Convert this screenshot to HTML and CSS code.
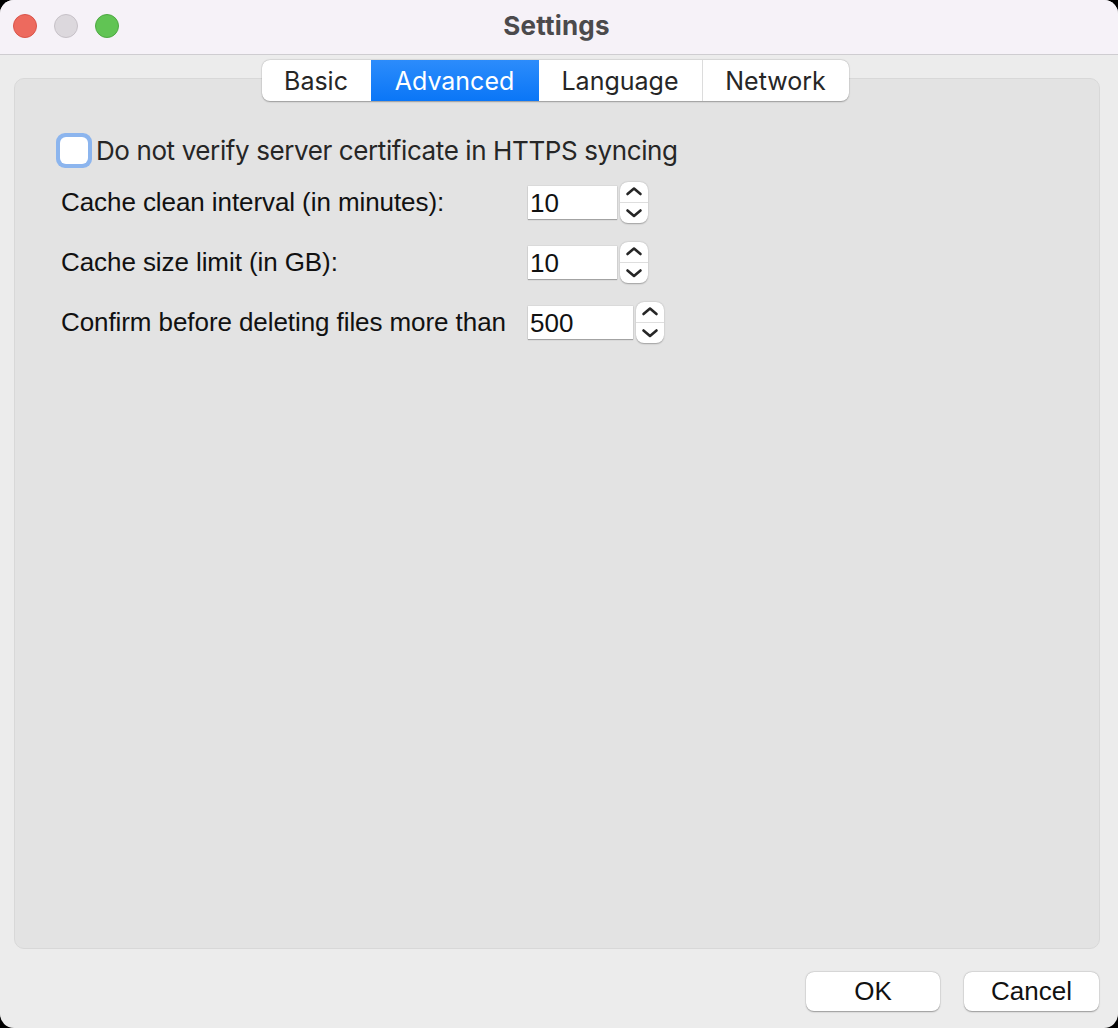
FILE: index.html
```html
<!DOCTYPE html>
<html>
<head>
<meta charset="utf-8">
<link rel="stylesheet" href="styles.css">
</head>
<body>
<div class="window">
  <div class="titlebar">
    <div class="lights">
      <span class="light red"></span>
      <span class="light gray"></span>
      <span class="light green"></span>
    </div>
    <div class="title">Settings</div>
  </div>
  <div class="main">
    <div class="tabs">
      <div class="tab">Basic</div>
      <div class="tab active">Advanced</div>
      <div class="tab">Language</div>
      <div class="tab">Network</div>
    </div>
    <div class="panel">
      <label class="check-row">
        <span class="check-ring"><span class="check-box"></span></span>
        <span class="check-label">Do not verify server certificate in HTTPS syncing</span>
      </label>
      <div class="row">
        <span class="label">Cache clean interval (in minutes):</span>
        <div class="spin">
          <span class="field">10</span>
          <span class="stepper">
            <svg width="28" height="41" viewBox="0 0 28 41"><path d="M7.5 12 L14 6.5 L20.5 12" fill="none" stroke="#262626" stroke-width="2.6" stroke-linecap="round" stroke-linejoin="round"/><path d="M7.5 28.5 L14 34 L20.5 28.5" fill="none" stroke="#262626" stroke-width="2.6" stroke-linecap="round" stroke-linejoin="round"/></svg>
          </span>
        </div>
      </div>
      <div class="row">
        <span class="label">Cache size limit (in GB):</span>
        <div class="spin">
          <span class="field">10</span>
          <span class="stepper">
            <svg width="28" height="41" viewBox="0 0 28 41"><path d="M7.5 12 L14 6.5 L20.5 12" fill="none" stroke="#262626" stroke-width="2.6" stroke-linecap="round" stroke-linejoin="round"/><path d="M7.5 28.5 L14 34 L20.5 28.5" fill="none" stroke="#262626" stroke-width="2.6" stroke-linecap="round" stroke-linejoin="round"/></svg>
          </span>
        </div>
      </div>
      <div class="row">
        <span class="label">Confirm before deleting files more than</span>
        <div class="spin">
          <span class="field wide">500</span>
          <span class="stepper">
            <svg width="28" height="41" viewBox="0 0 28 41"><path d="M7.5 12 L14 6.5 L20.5 12" fill="none" stroke="#262626" stroke-width="2.6" stroke-linecap="round" stroke-linejoin="round"/><path d="M7.5 28.5 L14 34 L20.5 28.5" fill="none" stroke="#262626" stroke-width="2.6" stroke-linecap="round" stroke-linejoin="round"/></svg>
          </span>
        </div>
      </div>
    </div>
    <div class="buttons">
      <button class="btn">OK</button>
      <button class="btn">Cancel</button>
    </div>
  </div>
</div>
</body>
</html>
```

FILE: styles.css
```css
html, body {
  margin: 0;
  padding: 0;
  background: #000;
}
.window {
  width: 1118px;
  height: 1028px;
  background: #ececec;
  border-radius: 14px;
  overflow: hidden;
  font-family: "Liberation Sans", Arial, sans-serif;
  display: flex;
  flex-direction: column;
}
.titlebar {
  height: 54px;
  background: #f6f2f8;
  border-bottom: 1px solid #cfcdd1;
  display: flex;
  align-items: center;
  justify-content: center;
  position: relative;
  flex: none;
}
.lights {
  position: absolute;
  left: 13px;
  top: 14px;
  display: flex;
  gap: 17px;
}
.light {
  width: 24px;
  height: 24px;
  border-radius: 50%;
  box-sizing: border-box;
}
.light.red { background: #ed6a5e; border: 1px solid #d9544a; }
.light.gray { background: #dcd8dd; border: 1px solid #c6c1c7; }
.light.green { background: #61c454; border: 1px solid #4ea843; }
.title {
  font-family: Inter, "Noto Sans", sans-serif;
  font-weight: 700;
  font-size: 26px;
  color: #4b4a4c;
  letter-spacing: 0.2px;
  margin-top: -4px;
  margin-left: -5px;
}
.main {
  flex: 1;
  display: flex;
  flex-direction: column;
  padding: 5px 18px 16px 14px;
}
.tabs {
  position: relative;
  z-index: 1;
  align-self: center;
  margin-right: 4px;
  display: flex;
  height: 41px;
  background: #fff;
  border-radius: 8px;
  box-shadow: 0 0.5px 1.5px rgba(0,0,0,0.3), 0 0 0 0.5px rgba(0,0,0,0.06);
  overflow: hidden;
  font-family: Inter, "Noto Sans", sans-serif;
  font-size: 25px;
  color: #262626;
}
.tab {
  display: flex;
  align-items: center;
  justify-content: center;
  border-left: 1px solid #dcdcdc;
  letter-spacing: 0;
  padding-top: 1px;
}
.tab:first-child { border-left: none; width: 109px; }
.tab:nth-child(2) { width: 168px; }
.tab:nth-child(3) { width: 163px; }
.tab:nth-child(4) { width: 146px; }
.tab.active {
  background: linear-gradient(#2c8cfb, #0a76f7);
  color: #fff;
  border-left: none;
}
.tab.active + .tab { border-left: none; }
.panel {
  margin-top: -23px;
  width: 1086px;
  height: 871px;
  box-sizing: border-box;
  background: #e3e3e3;
  border: 1px solid #d8d8d8;
  border-radius: 10px;
  padding: 54px 0 0 41px;
  display: flex;
  flex-direction: column;
}
.check-row {
  display: flex;
  align-items: center;
  height: 34px;
  margin-bottom: 5px;
}
.check-ring {
  width: 36px;
  height: 35px;
  box-sizing: border-box;
  border-radius: 9px;
  background: #8cb5ee;
  display: flex;
  align-items: center;
  justify-content: center;
}
.check-box {
  width: 28px;
  height: 27px;
  border-radius: 6px;
  background: #fff;
}
.check-label {
  margin-left: 4px;
  font-family: Inter, "Noto Sans", sans-serif;
  font-size: 26px;
  color: #262626;
  letter-spacing: -0.4px;
}
.row {
  display: flex;
  align-items: center;
  height: 60px;
  margin-left: 5px;
}
.label {
  width: 467px;
  font-size: 26px;
  color: #111;
  letter-spacing: -0.08px;
}
.spin {
  display: flex;
  align-items: center;
  gap: 3px;
}
.field {
  width: 89px;
  height: 33px;
  box-sizing: border-box;
  background: #fff;
  box-shadow: 0 1px 1px rgba(0,0,0,0.25), 0 0 0 0.5px rgba(0,0,0,0.08);
  font-size: 26px;
  color: #111;
  padding-left: 2px;
  line-height: 35px;
}
.field.wide { width: 105px; }
.stepper {
  width: 28px;
  height: 41px;
  box-sizing: border-box;
  background: #fff;
  border-radius: 8px;
  box-shadow: 0 0.5px 1.5px rgba(0,0,0,0.3);
  position: relative;
  display: block;
}
.stepper::after {
  content: "";
  position: absolute;
  left: 0;
  right: 0;
  top: 20px;
  height: 1px;
  background: #dedede;
}
.stepper svg { display: block; }
.buttons {
  display: flex;
  justify-content: flex-end;
  gap: 24px;
  margin-top: 23px;
  margin-right: 1px;
}
.btn {
  height: 39px;
  width: 134px;
  background: #fff;
  border: none;
  border-radius: 8px;
  box-shadow: 0 0.5px 1.5px rgba(0,0,0,0.35), 0 0 0 0.5px rgba(0,0,0,0.05);
  font-family: "Liberation Sans", Arial, sans-serif;
  font-size: 26px;
  color: #111;
  padding: 0;
}
.btn + .btn { width: 135px; }
```
